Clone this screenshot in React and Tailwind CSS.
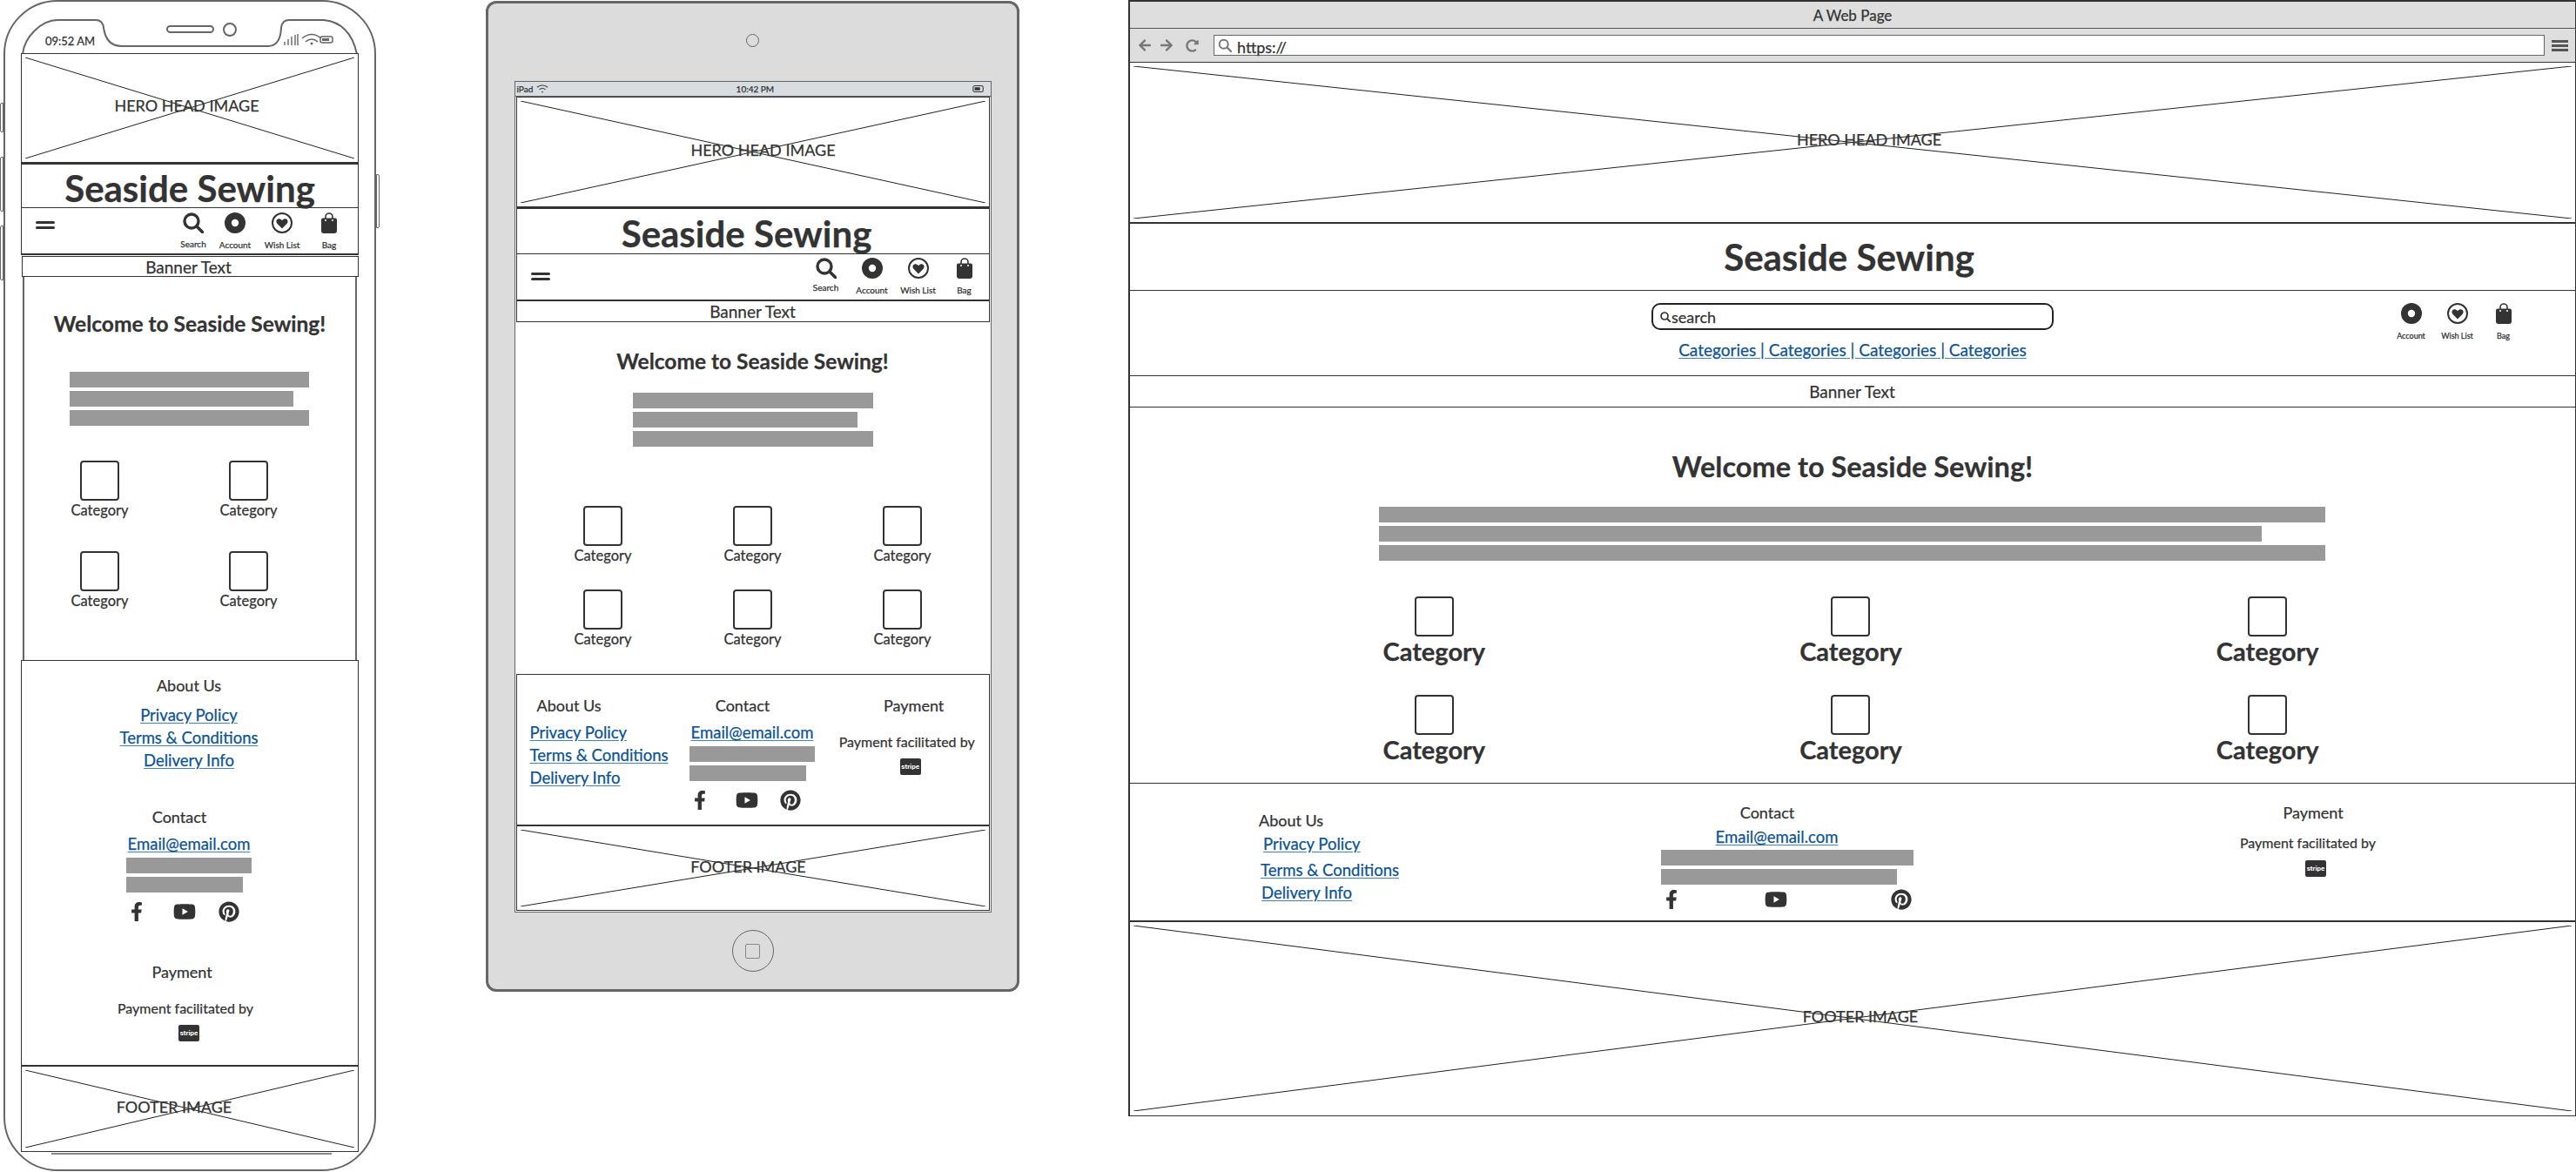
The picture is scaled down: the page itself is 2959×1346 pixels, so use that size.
import { FaArrowLeft, FaArrowRight, FaFacebookF, FaPinterest, FaRedoAlt, FaYoutube } from "react-icons/fa";

const INK = "#333333";

function SearchIcon({ className = "w-6 h-6" }) {
  return (
    <svg viewBox="0 0 24 24" className={className} fill="none" stroke={INK}>
      <circle cx="10" cy="10" r="8" strokeWidth="3.4" />
      <path d="M16 16l6.5 6.5" strokeWidth="3.6" strokeLinecap="round" />
    </svg>
  );
}

function AccountIcon() {
  return (
    <svg viewBox="0 0 24 24" className="w-6 h-6">
      <circle cx="12" cy="12" r="12" fill={INK} />
      <circle cx="12" cy="12" r="4.2" fill="#fff" />
    </svg>
  );
}

function HeartIcon() {
  return (
    <svg viewBox="0 0 24 24" className="w-6 h-6">
      <circle cx="12" cy="12" r="11" fill="none" stroke={INK} strokeWidth="2" />
      <path d="M12 18.5l-5.4-5.5c-1.6-1.7-1.5-3.8-.2-5 1.5-1.3 3.7-1 5.6 1.2 1.9-2.2 4.1-2.5 5.6-1.2 1.3 1.2 1.4 3.3-.2 5z" fill={INK} />
    </svg>
  );
}

function BagIcon() {
  return (
    <svg viewBox="0 0 24 24" className="w-6 h-6">
      <path d="M8 8V5a4 4 0 018 0v3" fill="none" stroke={INK} strokeWidth="1.6" />
      <path d="M3 8.5a2 2 0 012-2h14a2 2 0 012 2V21a3 3 0 01-3 3H6a3 3 0 01-3-3z" fill={INK} />
      <circle cx="8" cy="9" r="1" fill="#fff" />
      <circle cx="16" cy="9" r="1" fill="#fff" />
    </svg>
  );
}

function Hamburger({ className }) {
  return (
    <div className={"flex flex-col gap-[3px] w-[22px] " + className}>
      <div className="h-[3px] rounded-full bg-[#333]" />
      <div className="h-[3px] rounded-full bg-[#333]" />
    </div>
  );
}

function NavItem({ icon, label, className = "w-[52px]", labelClass = "mt-[8px] text-[10px]" }) {
  return (
    <div className={"flex flex-col items-center " + className}>
      {icon}
      <span className={"leading-[10px] " + labelClass}>{label}</span>
    </div>
  );
}

function Placeholder({ className, label, labelClass }) {
  return (
    <div className={"relative flex items-center justify-center " + className}>
      <svg viewBox="0 0 100 100" preserveAspectRatio="none" className="absolute inset-[4px] w-[calc(100%-8px)] h-[calc(100%-8px)]">
        <path d="M0 0L100 100M100 0L0 100" stroke="#222" strokeWidth="1" fill="none" vectorEffect="non-scaling-stroke" />
      </svg>
      <span className={"relative leading-none " + labelClass}>{label}</span>
    </div>
  );
}

function Bar({ className }) {
  return <div className={"h-[18px] bg-[#999] " + className} />;
}

function Category({ textClass = "mt-[2px] text-[16.5px] leading-[18px]" }) {
  return (
    <div className="flex flex-col items-center">
      <div className="w-[45px] h-[46px] rounded-[4px] border-2 border-[#333]" />
      <span className={textClass}>Category</span>
    </div>
  );
}

function Link({ children, className = "" }) {
  return (
    <a className={"block h-[26px] text-[18.5px] leading-[26px] text-[#0b5394] underline decoration-[#3d85c6] underline-offset-2 whitespace-nowrap " + className}>
      {children}
    </a>
  );
}

function Stripe({ className = "" }) {
  return (
    <div className={"flex h-[19px] w-[24px] items-center justify-center rounded-[2px] bg-[#333] text-[8px] font-bold leading-none text-white [font-family:Roboto,sans-serif] [-webkit-text-stroke-width:0] " + className}>
      stripe
    </div>
  );
}

function Socials({ className, fClass, ytClass, pinClass }) {
  return (
    <div className={"flex items-center h-[24px] " + className}>
      <FaFacebookF size={22} className={"text-[#333] " + fClass} />
      <FaYoutube size={26} className={"text-[#333] " + ytClass} />
      <FaPinterest size={24} className={"text-[#333] " + pinClass} />
    </div>
  );
}

function Phone() {
  return (
    <div className="absolute left-[4px] top-0 w-[428px] h-[1345px] rounded-[62px] border-2 border-[#666]">
      {/* side buttons */}
      <div className="absolute -left-[6px] top-[116px] w-[4px] h-[34px] rounded-l-[2px] border border-[#666]" />
      <div className="absolute -left-[6px] top-[178px] w-[4px] h-[63px] rounded-l-[2px] border border-[#666]" />
      <div className="absolute -left-[6px] top-[257px] w-[4px] h-[63px] rounded-l-[2px] border border-[#666]" />
      <div className="absolute -right-[6px] top-[198px] w-[4px] h-[62px] rounded-r-[2px] border border-[#666]" />

      {/* notch and status bar */}
      <svg viewBox="0 0 428 62" className="absolute -left-[2px] top-0 w-[428px] h-[62px]" fill="none" stroke="#666">
        <path d="M22 60C24 40 44 21 62 21H106Q114 21 115 30Q118 51 136 51H304Q318 51 319 30Q320 21 328 21H368Q398 24 406 60" strokeWidth="2" />
        <rect x="188" y="28" width="53" height="7" rx="3.5" strokeWidth="2" />
        <circle cx="260" cy="32" r="7" strokeWidth="2" />
        <path d="M323 50v-4M327 50v-7M331 50v-10M335 50v-12M338 50v-13" strokeWidth="1.4" />
        <path d="M343 42q11-9 22 0M347 46q7-6 14 0" strokeWidth="1.6" />
        <circle cx="354" cy="48" r="1.5" fill="#666" stroke="none" />
        <rect x="364" y="40" width="14" height="7" rx="2" strokeWidth="1.5" />
        <rect x="366" y="42" width="8" height="3" fill="#666" stroke="none" />
      </svg>
      <span className="absolute left-[46px] top-[38px] text-[13px] leading-[14px]">09:52 AM</span>

      <div className="relative w-[388px] ml-[18px] mt-[59px]">
        <Placeholder className="h-[126px] border border-[#333]" label="HERO HEAD IMAGE" labelClass="text-[18px] pr-[7px] pb-[6px]" />
        <div className="flex h-[52px] justify-center border border-t-2 border-[#333] text-[42px] leading-[54px] font-bold">Seaside Sewing</div>
        <div className="flex h-[55px] items-start border-x border-b-2 border-[#333] -mt-px">
          <Hamburger className="ml-[16px] mt-[16px]" />
          <div className="ml-auto mr-[9px] mt-[6px] grid grid-cols-[48px_48px_60px_48px]">
            <NavItem className="" icon={<SearchIcon />} label="Search" labelClass="mt-[6px] text-[10px] pt-[1px]" />
            <NavItem className="" icon={<AccountIcon />} label="Account" />
            <NavItem className="" icon={<HeartIcon />} label="Wish List" />
            <NavItem className="" icon={<BagIcon />} label="Bag" />
          </div>
        </div>
        <div className="ml-[1px] mt-px flex h-[24px] items-center justify-center border border-[#333] pr-[4px] text-[19px] leading-none">Banner Text</div>

        <div className="mx-[2px] h-[440px] border-x-2 border-[#666] flex flex-col items-center pt-[39px]">
          <h2 className="text-[24.5px] leading-[30px] font-bold">Welcome to Seaside Sewing!</h2>
          <div className="mt-[40px] mr-[2px] flex w-[275px] flex-col gap-[4px]">
            <Bar className="w-full" />
            <Bar className="w-[257px]" />
            <Bar className="w-full" />
          </div>
          <div className="mt-[40px] mr-[36px] grid w-[342px] grid-cols-2 gap-y-[38px]">
            <Category />
            <Category />
            <Category />
            <Category />
          </div>
        </div>

        <div className="flex h-[465px] flex-col items-center border-x border-t border-[#333] pt-[18px] pr-[2px]">
          <h3 className="text-[18px] leading-[20px]">About Us</h3>
          <div className="mt-[11px] flex flex-col items-center">
            <Link>Privacy Policy</Link>
            <Link>Terms &amp; Conditions</Link>
            <Link>Delivery Info</Link>
          </div>
          <h3 className="mt-[42px] mr-[22px] text-[18px] leading-[20px]">Contact</h3>
          <Link className="mt-[8px]">Email@email.com</Link>
          <div className="mt-[3px] flex w-[144px] flex-col gap-[4px]">
            <Bar className="w-full" />
            <Bar className="w-[134px]" />
          </div>
          <Socials className="mt-[10px] w-[144px]" fClass="ml-[1px]" ytClass="ml-[31px]" pinClass="ml-[26px]" />
          <h3 className="mt-[47px] mr-[16px] text-[18px] leading-[20px]">Payment</h3>
          <p className="mt-[22px] mr-[8px] text-[16px] leading-[20px]">Payment facilitated by</p>
          <Stripe className="mt-[9px]" />
        </div>

        <Placeholder className="h-[100px] border-x border-t-2 border-b border-[#333]" label="FOOTER IMAGE" labelClass="text-[18px] pr-[36px] pb-[6px]" />
      </div>
      <div className="ml-[53px] mt-[1px] h-[2px] w-[322px] bg-[#888]" />
    </div>
  );
}

function Tablet() {
  return (
    <div className="absolute left-[558px] top-px flex h-[1138px] w-[613px] flex-col items-center rounded-[12px] border-[3px] border-[#666] bg-[#dcdcdc]">
      <div className="mt-[35px] h-[15px] w-[15px] rounded-full border border-[#666]" />
      <div className="mt-[39px] h-[955px] w-[548px] border border-[#666] bg-white">
        <div className="flex h-[17px] items-center justify-between border-b border-[#666] bg-[#d7dde0] px-[2px] text-[10px] leading-none">
          <span className="flex items-center gap-[4px]">iPad
            <svg viewBox="0 0 16 12" className="h-[12px] w-[14px]" fill="none" stroke="#444" strokeWidth="1.2">
              <path d="M1 4q7-5 14 0M4 7q4-3 8 0" />
              <circle cx="8" cy="10" r="1" fill="#444" stroke="none" />
            </svg>
          </span>
          <span className="mr-[12px]">10:42 PM</span>
          <svg viewBox="0 0 16 10" className="mr-[5px] h-[10px] w-[14px]" fill="none" stroke="#333" strokeWidth="1.2">
            <rect x="1" y="1" width="13" height="8" rx="2" />
            <rect x="3" y="3" width="7" height="4" fill="#333" stroke="none" />
          </svg>
        </div>
        <Placeholder className="mx-px h-[127px] border border-[#333]" label="HERO HEAD IMAGE" labelClass="text-[18px] pl-[24px] pb-[6px]" />
        <div className="mx-px flex h-[53px] justify-center border-x border-t-2 border-[#333] pr-[14px] text-[42px] leading-[56px] font-bold">Seaside Sewing</div>
        <div className="mx-px flex h-[55px] items-start border-x border-t border-b-2 border-[#333]">
          <Hamburger className="ml-[16px] mt-[21px]" />
          <div className="ml-auto mr-[2px] mt-[4px] flex gap-[1px]">
            <NavItem icon={<SearchIcon />} label="Search" labelClass="mt-[5px] text-[10px]" />
            <NavItem icon={<AccountIcon />} label="Account" />
            <NavItem icon={<HeartIcon />} label="Wish List" />
            <NavItem icon={<BagIcon />} label="Bag" />
          </div>
        </div>
        <div className="mx-px flex h-[24px] items-center justify-center border-x border-b border-[#333] text-[19px] leading-none">Banner Text</div>

        <div className="flex h-[404px] flex-col items-center pt-[30px]">
          <h2 className="text-[24.5px] leading-[30px] font-bold">Welcome to Seaside Sewing!</h2>
          <div className="mt-[21px] flex w-[276px] flex-col gap-[4px]">
            <Bar className="w-full" />
            <Bar className="w-[258px]" />
            <Bar className="w-full" />
          </div>
          <div className="mt-[68px] grid w-[516px] grid-cols-3 gap-y-[30px]">
            <Category />
            <Category />
            <Category />
            <Category />
            <Category />
            <Category />
          </div>
        </div>

        <div className="mx-px flex h-[173px] border-x border-t border-[#333] pt-[25px]">
          <div className="w-[199px] pl-[15px]">
            <h3 className="ml-[8px] text-[18px] leading-[20px]">About Us</h3>
            <div className="mt-[8px]">
              <Link>Privacy Policy</Link>
              <Link>Terms &amp; Conditions</Link>
              <Link>Delivery Info</Link>
            </div>
          </div>
          <div className="flex w-[144px] flex-col items-center">
            <h3 className="mr-[22px] text-[18px] leading-[20px]">Contact</h3>
            <Link className="mt-[8px]">Email@email.com</Link>
            <div className="mt-[3px] flex w-full flex-col gap-[4px]">
              <Bar className="w-full" />
              <Bar className="w-[134px]" />
            </div>
            <Socials className="mt-[10px] w-full" fClass="ml-[1px]" ytClass="ml-[30px]" pinClass="ml-[25px]" />
          </div>
          <div className="ml-[20px] flex w-[180px] flex-col items-center">
            <h3 className="ml-[8px] text-[18px] leading-[20px]">Payment</h3>
            <p className="mt-[22px] mr-[8px] text-[16px] leading-[20px] whitespace-nowrap">Payment facilitated by</p>
            <Stripe className="mt-[9px]" />
          </div>
        </div>
        <Placeholder className="mx-px h-[99px] border-x border-t-2 border-b border-[#333]" label="FOOTER IMAGE" labelClass="text-[18px] pr-[10px] pb-[4px]" />
      </div>
      <div className="mt-[20px] flex h-[48px] w-[48px] items-center justify-center rounded-full border border-[#666]">
        <div className="h-[17px] w-[17px] rounded-[2px] border-[1.5px] border-[#888]" />
      </div>
    </div>
  );
}

function Browser() {
  return (
    <div className="absolute left-[1296px] top-0 h-[1282px] w-[1663px] border-t-2 border-l-2 border-r border-b border-[#333]">
      <div className="flex h-[31px] items-center justify-center border-b border-[#555] bg-[#dedede] text-[17px] leading-none">A Web Page</div>
      <div className="flex h-[39px] items-center border-b border-[#333] bg-[#dedede] pl-[9px] pr-[8px]">
        <FaArrowLeft size={16} className="text-[#777]" />
        <FaArrowRight size={16} className="ml-[9px] text-[#777]" />
        <FaRedoAlt size={15} className="ml-[14px] text-[#777]" />
        <div className="ml-[17px] flex h-[24px] flex-1 items-center border border-[#666] bg-white pl-[4px] text-[18px] leading-none">
          <SearchIconGray />
          <span className="ml-[6px] pt-[4px]">https://</span>
        </div>
        <div className="ml-[8px] flex w-[19px] flex-col gap-[2px]">
          <div className="h-[3px] bg-[#555]" />
          <div className="h-[3px] bg-[#555]" />
          <div className="h-[3px] bg-[#555]" />
        </div>
      </div>
      <Placeholder className="h-[185px] border-b-2 border-[#333]" label="HERO HEAD IMAGE" labelClass="text-[18px] pl-[38px] pb-[8px]" />
      <div className="flex h-[77px] items-center justify-center border-b border-[#333] pr-[8px] text-[42px] leading-none font-bold">Seaside Sewing</div>
      <div className="grid h-[98px] grid-cols-[1fr_462px_1fr] border-b border-[#333]">
        <div />
        <div className="flex flex-col items-center pt-[14px]">
          <div className="flex h-[31px] w-full items-center gap-[1px] rounded-[10px] border-2 border-[#222] pl-[8px] text-[18px] leading-none">
            <SearchIcon className="h-[12px] w-[12px]" />
            search
          </div>
          <a className="mt-[10px] text-[19px] leading-[26px] text-[#0b5394] underline decoration-[#3d85c6] underline-offset-2 whitespace-nowrap">Categories | Categories | Categories | Categories</a>
        </div>
        <div className="flex justify-end pt-[14px] pr-[56px]">
          <NavItem className="w-[53px]" icon={<AccountIcon />} label="Account" labelClass="mt-[9px] text-[9px]" />
          <NavItem className="w-[53px]" icon={<HeartIcon />} label="Wish List" labelClass="mt-[9px] text-[9px]" />
          <NavItem className="w-[53px]" icon={<BagIcon />} label="Bag" labelClass="mt-[9px] text-[9px]" />
        </div>
      </div>
      <div className="-ml-[2px] flex h-[37px] items-center justify-center border-y border-l border-[#333] text-[19px] leading-none -mt-px">Banner Text</div>

      <div className="flex h-[432px] flex-col items-center border-b border-[#333] pt-[48px]">
        <h2 className="text-[32.5px] leading-[40px] font-bold">Welcome to Seaside Sewing!</h2>
        <div className="mt-[26px] mr-[2px] flex w-[1087px] flex-col gap-[4px]">
          <Bar className="w-full" />
          <Bar className="w-[1014px]" />
          <Bar className="w-full" />
        </div>
        <div className="mt-[41px] mr-[4px] grid w-[1436px] grid-cols-3 gap-y-[35px]">
          <Category textClass="pt-[2px] text-[29px] leading-[30px] font-bold" />
          <Category textClass="pt-[2px] text-[29px] leading-[30px] font-bold" />
          <Category textClass="pt-[2px] text-[29px] leading-[30px] font-bold" />
          <Category textClass="pt-[2px] text-[29px] leading-[30px] font-bold" />
          <Category textClass="pt-[2px] text-[29px] leading-[30px] font-bold" />
          <Category textClass="pt-[2px] text-[29px] leading-[30px] font-bold" />
        </div>
      </div>

      <div className="flex h-[157px]">
        <div className="w-[610px] pl-[148px] pt-[32px]">
          <h3 className="text-[18px] leading-[20px]">About Us</h3>
          <Link className="mt-[4px] ml-[5px]">Privacy Policy</Link>
          <Link className="mt-[4px] ml-[2px]">Terms &amp; Conditions</Link>
          <Link className="ml-[3px]">Delivery Info</Link>
        </div>
        <div className="flex w-[290px] flex-col items-center pt-[23px]">
          <h3 className="mr-[46px] text-[18px] leading-[20px]">Contact</h3>
          <Link className="mt-[5px] mr-[24px]">Email@email.com</Link>
          <div className="mt-[2px] flex w-full flex-col gap-[4px]">
            <Bar className="w-full" />
            <Bar className="w-[271px]" />
          </div>
          <Socials className="mt-[5px] w-full" fClass="ml-[1px]" ytClass="ml-[96px]" pinClass="ml-[119px]" />
        </div>
        <div className="ml-[257px] flex w-[400px] flex-col items-center pt-[23px]">
          <h3 className="ml-[4px] text-[18px] leading-[20px]">Payment</h3>
          <p className="mt-[15px] mr-[8px] text-[16px] leading-[20px]">Payment facilitated by</p>
          <Stripe className="ml-[10px] mt-[10px]" />
        </div>
      </div>
      <Placeholder className="h-[223px] border-t-2 border-[#333]" label="FOOTER IMAGE" labelClass="text-[18px] pl-[18px] pb-[6px]" />
    </div>
  );
}

function SearchIconGray() {
  return (
    <svg viewBox="0 0 24 24" className="h-[16px] w-[16px]" fill="none" stroke="#777">
      <circle cx="10" cy="10" r="7.5" strokeWidth="3" />
      <path d="M16 16l6.5 6.5" strokeWidth="3.4" strokeLinecap="round" />
    </svg>
  );
}

export default function App() {
  return (
    <div className="relative h-[1346px] w-[2959px] overflow-hidden bg-white text-[#333] [font-family:Lato,sans-serif] [-webkit-text-stroke-width:0.25px]">
      <Phone />
      <Tablet />
      <Browser />
    </div>
  );
}
